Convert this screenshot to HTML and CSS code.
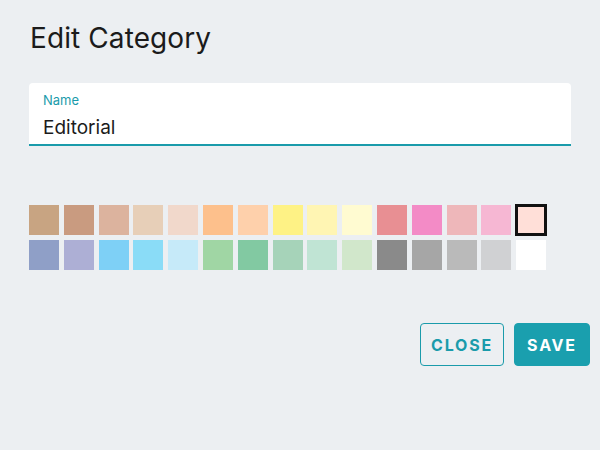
FILE: index.html
```html
<!DOCTYPE html>
<html>
<head>
<meta charset="utf-8">
<link rel="stylesheet" href="styles.css">
</head>
<body>
<div class="dialog">
  <h1 class="title">Edit Category</h1>
  <div class="field">
    <label class="label">Name</label>
    <div class="value">Editorial</div>
  </div>
  <div class="swatches">
    <div class="sw" style="background:#c8a482"></div>
    <div class="sw" style="background:#c99b80"></div>
    <div class="sw" style="background:#dcb39e"></div>
    <div class="sw" style="background:#e7cfb8"></div>
    <div class="sw" style="background:#f1d8cb"></div>
    <div class="sw" style="background:#fdc08c"></div>
    <div class="sw" style="background:#fed0ab"></div>
    <div class="sw" style="background:#fef285"></div>
    <div class="sw" style="background:#fff5b3"></div>
    <div class="sw" style="background:#fffbd1"></div>
    <div class="sw" style="background:#e88f93"></div>
    <div class="sw" style="background:#f38bc6"></div>
    <div class="sw" style="background:#eeb7ba"></div>
    <div class="sw" style="background:#f6b7d3"></div>
    <div class="sw selected" style="background:#ffdfd8"></div>
    <div class="sw" style="background:#8f9fc7"></div>
    <div class="sw" style="background:#adafd5"></div>
    <div class="sw" style="background:#7ed0f6"></div>
    <div class="sw" style="background:#8adcf7"></div>
    <div class="sw" style="background:#c6eaf9"></div>
    <div class="sw" style="background:#a0d6a4"></div>
    <div class="sw" style="background:#82c9a2"></div>
    <div class="sw" style="background:#a6d3b9"></div>
    <div class="sw" style="background:#c0e4d4"></div>
    <div class="sw" style="background:#d1e7cb"></div>
    <div class="sw" style="background:#8a8a8a"></div>
    <div class="sw" style="background:#a6a6a6"></div>
    <div class="sw" style="background:#bababa"></div>
    <div class="sw" style="background:#d0d1d3"></div>
    <div class="sw" style="background:#ffffff"></div>
  </div>
  <div class="actions">
    <button class="btn btn-outline">CLOSE</button>
    <button class="btn btn-primary">SAVE</button>
  </div>
</div>
</body>
</html>
```

FILE: styles.css
```css
html, body {
  margin: 0;
  padding: 0;
  background: #eceff2;
  width: 600px;
  height: 450px;
  overflow: hidden;
}
body {
  font-family: Inter, "Noto Sans", sans-serif;
  color: #1b1b1b;
}
.dialog {
  padding: 20px 29px 0 29px;
  display: flex;
  flex-direction: column;
}
.title {
  margin: 0 0 0 1px;
  font-size: 28px;
  font-weight: 400;
  line-height: 36px;
  letter-spacing: 0.1px;
}
.field {
  margin-top: 27px;
  width: 542px;
  height: 63px;
  box-sizing: border-box;
  background: #ffffff;
  border-radius: 4px 4px 0 0;
  border-bottom: 2px solid #1a9bab;
  padding: 9px 0 0 14px;
}
.label {
  display: block;
  font-size: 13px;
  line-height: 16px;
  color: #1a9bab;
}
.value {
  margin-top: 8px;
  font-size: 19px;
  line-height: 24px;
  color: #1b1b1b;
}
.swatches {
  margin-top: 59px;
  display: grid;
  grid-template-columns: repeat(15, 30px);
  grid-auto-rows: 30px;
  column-gap: 4.8px;
  row-gap: 5px;
}
.sw {
  width: 30px;
  height: 30px;
}
.sw.selected {
  box-sizing: border-box;
  border: 3px solid #111111;
  margin: -1px 0 0 -1px;
  width: 32px;
  height: 32px;
}
.actions {
  margin-top: 53px;
  display: flex;
  justify-content: flex-end;
  gap: 10px;
  margin-right: -19px;
}
.btn {
  height: 43px;
  border-radius: 4px;
  font-family: Inter, "Noto Sans", sans-serif;
  font-size: 16px;
  font-weight: 700;
  letter-spacing: 1.8px;
  padding: 0 10px;
  cursor: pointer;
}
.btn-outline {
  width: 84px;
  background: transparent;
  border: 1px solid #1a9bab;
  color: #1a9bab;
}
.btn-primary {
  width: 76px;
  background: #1a9fae;
  border: 1px solid #1a9fae;
  color: #ffffff;
}
```
